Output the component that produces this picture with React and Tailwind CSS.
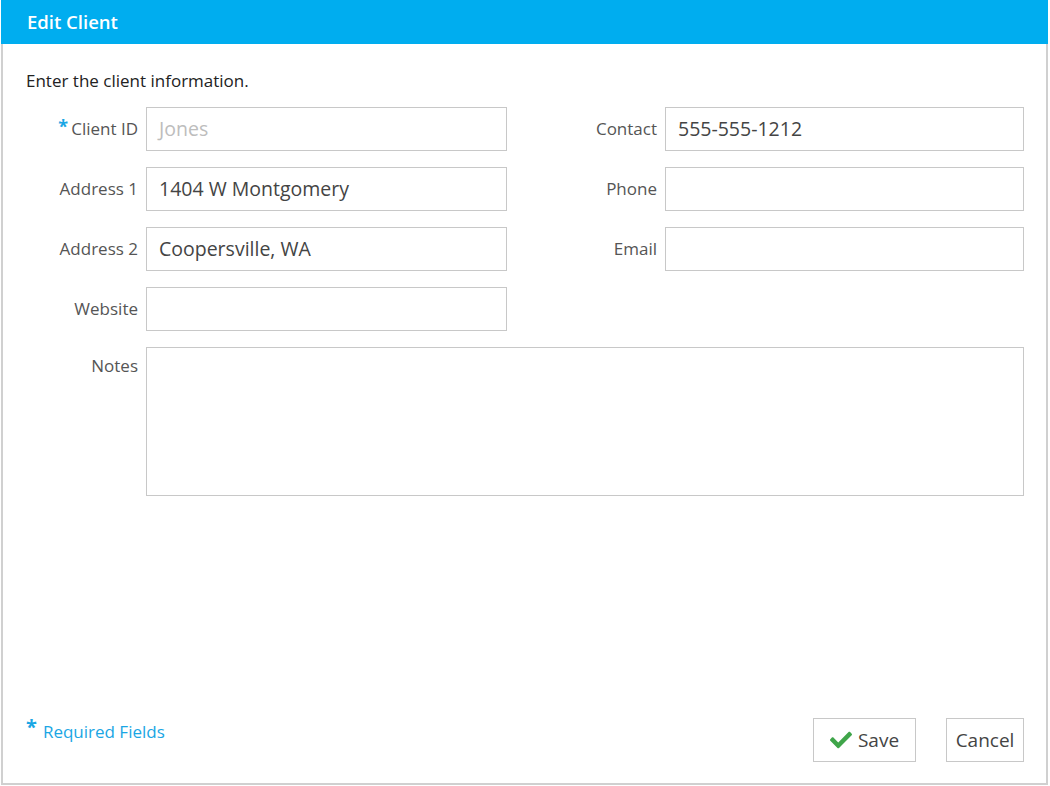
import { FaCheck } from 'react-icons/fa'

const LEFT = [
  { label: 'Client ID', value: 'Jones', placeholder: true, required: true },
  { label: 'Address 1', value: '1404 W Montgomery' },
  { label: 'Address 2', value: 'Coopersville, WA' },
  { label: 'Website', value: '' },
]

const RIGHT = [
  { label: 'Contact', value: '555-555-1212' },
  { label: 'Phone', value: '' },
  { label: 'Email', value: '' },
]

function Field({ item, labelW }) {
  return (
    <div className="flex h-[44px] items-center gap-[8px]">
      <div className={`${labelW} flex items-center justify-end text-[17px] text-[#555]`}>
        {item.required && <span className="mr-[3px] -mt-[6px] text-[18px] font-bold text-[#1aa6e4]">*</span>}
        {item.label}
      </div>
      <div
        className={`flex h-[44px] flex-1 items-center border border-[#c8c8c8] px-[12px] text-[19.5px] ${
          item.placeholder ? 'text-[#bdbdbd]' : 'text-[#444]'
        }`}
      >
        {item.value}
      </div>
    </div>
  )
}

export default function App() {
  return (
    <div className="h-[786px] w-[1050px] bg-white" style={{ fontFamily: '"Open Sans", "Noto Sans", sans-serif' }}>
      <div className="ml-[1px] flex h-[785px] w-[1047px] flex-col border-x-2 border-b-2 border-[#d0d0d0]">
        {/* titel */}
        <div className="-mx-[2px] flex h-[44px] items-center bg-[#00adef] px-[26px] text-[18.5px] font-semibold text-white">
          Edit Client
        </div>

        <div className="flex flex-1 flex-col pl-[23px] pr-[22px]">
          <p className="mt-[27px] text-[17px] leading-[20px] text-[#222]">Enter the client information.</p>

          <div className="mt-[16px] flex gap-[19px]">
            <div className="flex w-[481px] flex-col gap-[16px]">
              {LEFT.map((item) => (
                <Field key={item.label} item={item} labelW="w-[112px]" />
              ))}
            </div>
            <div className="flex flex-1 flex-col gap-[16px]">
              {RIGHT.map((item) => (
                <Field key={item.label} item={item} labelW="w-[131px]" />
              ))}
            </div>
          </div>

          <div className="mt-[16px] flex gap-[8px]">
            <div className="w-[112px] pt-[6px] text-right text-[17px] text-[#555]">Notes</div>
            <div className="h-[149px] flex-1 border border-[#c8c8c8]" />
          </div>

          {/* stopka */}
          <div className="mt-auto mb-[21px] flex items-end justify-between">
            <div className="mb-[18px] flex items-center text-[17px] text-[#1aa6e4]">
              <span className="mr-[6px] -mt-[8px] text-[20px] font-bold">*</span>
              Required Fields
            </div>
            <div className="flex gap-[30px]">
              <button className="flex h-[44px] w-[103px] items-center justify-center gap-[6px] border border-[#c8c8c8] bg-white text-[19px] text-[#444]">
                <FaCheck className="h-[22px] w-[22px] text-[#3fa54a]" />
                Save
              </button>
              <button className="flex h-[44px] w-[78px] items-center justify-center border border-[#c8c8c8] bg-white text-[19px] text-[#444]">
                Cancel
              </button>
            </div>
          </div>
        </div>
      </div>
    </div>
  )
}
